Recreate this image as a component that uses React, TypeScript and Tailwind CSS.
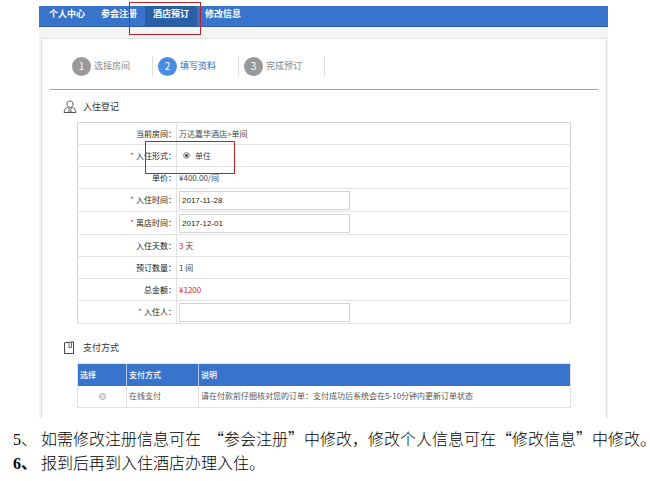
import React, { useState } from 'react';

const navItems = ['个人中心', '参会注册', '酒店预订', '修改信息'];
const steps = ['选择房间', '填写资料', '完成预订'];

const inputClass =
  'mt-0.5 mb-px block h-[19px] w-[171px] border border-[#d4d4d4] bg-white px-0.5 font-["Liberation_Sans","Noto_Sans_CJK_SC",sans-serif] text-[8px] text-[#222]';
const radioClass =
  'block size-[7px] appearance-none rounded-full border border-[#aaa] bg-[#e2e2e2] checked:bg-[#444] checked:shadow-[inset_0_0_0_1px_#eee]';

const PersonIcon = () => (
  <svg width="14" height="14" viewBox="0 0 14 14" fill="none" stroke="#555" strokeWidth="1">
    <path d="M7 1C4.9 1 3.9 2.4 3.9 4.1S5.2 7.4 7 7.4s3.1-1.6 3.1-3.3S9.1 1 7 1Z" />
    <path d="M4.6 7.2C2.8 8 1.3 9.6 1 12.500H13C12.700 9.600 11.200 8 9.400 7.200" />
    <path d="M4.800 7.400 6.300 9.300M9.200 7.400 7.700 9.300M6.300 9.300h1.400L8.300 12H5.700Z" strokeWidth="0.8" />
  </svg>
);

const BookIcon = () => (
  <svg width="12" height="14" viewBox="0 0 12 14" fill="none" stroke="#444" strokeWidth="1">
    <path d="M1.500 1.800 10.500 .800V13L9.500 12.500H1.500Z" />
    <path d="M6 1.500V6.500H8.500V1.200" strokeWidth="0.8" />
  </svg>
);

interface RowProps {
  label: string;
  htmlFor?: string;
  required?: boolean;
  children: React.ReactNode;
}

const Row: React.FC<RowProps> = ({ label, htmlFor, required, children }) => (
  <tr className="border-b border-[#e2e2e2]">
    <th className="h-[22px] w-[99px] border-r border-[#e2e2e2] p-0 text-right font-normal text-[#222]">
      {required && <span className="mr-0.5 text-[#e03030]">*</span>}
      <label htmlFor={htmlFor}>{label}：</label>
    </th>
    <td className="relative p-0 pl-0.5">{children}</td>
  </tr>
);

const SectionTitle: React.FC<{ icon: React.ReactNode; title: string }> = ({ icon, title }) => (
  <h2 className="flex h-4 items-center pl-[21px] text-[9px] text-[#333]">
    <span className="w-5">{icon}</span>
    {title}
  </h2>
);

export default function App() {
  const [checkIn, setCheckIn] = useState('2017-11-28');
  const [checkOut, setCheckOut] = useState('2017-12-01');
  const [guest, setGuest] = useState('');

  return (
    <div className="bg-white pt-1.5 font-['Noto_Sans_CJK_SC',sans-serif]" lang="zh-CN">
      <div className="mr-[42px] ml-[39px] bg-[#f4f4f4] text-[8px] leading-3">
        {/* Top navigation */}
        <nav className="flex h-[21px] border-b border-[#2f5f9f] bg-[#3874cb] pl-0.5">
          {navItems.map((item, index) => (
            <div key={item} className="relative">
              <a
                href="#"
                className={`block h-5 px-2 text-[9px] leading-4 font-bold text-white ${index === 2 ? 'bg-[#2a5fa8]' : ''}`}
              >
                {item}
              </a>
              {index === 2 && (
                <div className="pointer-events-none absolute -top-1 -left-4 z-10 h-[33px] w-[72px] border border-[#c22026]" />
              )}
            </div>
          ))}
        </nav>

        <main className="mt-[11px] mr-px ml-0.5 border-x border-t border-[#e2e2e2] bg-white pb-2.5">
          {/* Steps */}
          <ol className="mx-2 flex border-b border-[#8ba6c4] pt-[17px] pb-[13px] pl-[17px]">
            {steps.map((step, index) => (
              <li key={step} className="flex h-5 w-[86px] items-center gap-[3px] border-r border-[#ddd] pl-[5px]">
                <span
                  className={`flex size-[19px] items-center justify-center rounded-full text-[10px] text-white ${
                    index === 1 ? 'bg-[#4a8adf]' : 'bg-[#999]'
                  }`}
                >
                  {index + 1}
                </span>
                <span className={`text-[9px] ${index === 1 ? 'text-[#2f68bd]' : 'text-[#888]'}`}>{step}</span>
              </li>
            ))}
          </ol>

          {/* Check-in form */}
          <div className="pt-[9px]">
            <SectionTitle icon={<PersonIcon />} title="入住登记" />
          </div>
          <div className="mx-[35px] mt-[7px]">
            <table className="w-full border-collapse border border-[#d4d4d4] text-[#444]">
              <tbody>
                <Row label="当前房间">万达嘉华酒店&gt;单间</Row>
                <Row label="入住形式" htmlFor="single" required>
                  <div className="flex items-center gap-[5px] pl-1">
                    <input id="single" type="radio" name="stay" defaultChecked className={radioClass} />
                    单住
                  </div>
                  <div className="pointer-events-none absolute -top-1 -left-8 z-10 h-[33px] w-[90px] border border-[#c22026]" />
                </Row>
                <Row label="单价">¥400.00/间</Row>
                <Row label="入住时间" htmlFor="checkin" required>
                  <input id="checkin" className={inputClass} value={checkIn} onChange={(e) => setCheckIn(e.target.value)} />
                </Row>
                <Row label="离店时间" htmlFor="checkout" required>
                  <input id="checkout" className={inputClass} value={checkOut} onChange={(e) => setCheckOut(e.target.value)} />
                </Row>
                <Row label="入住天数">
                  <span className="text-[#e8202c]">3</span> 天
                </Row>
                <Row label="预订数量">1 间</Row>
                <Row label="总金额">
                  <span className="text-[#e8202c]">¥1200</span>
                </Row>
                <Row label="入住人" htmlFor="guest" required>
                  <input id="guest" className={inputClass} value={guest} onChange={(e) => setGuest(e.target.value)} />
                </Row>
              </tbody>
            </table>
          </div>

          {/* Payment */}
          <div className="pt-4">
            <SectionTitle icon={<BookIcon />} title="支付方式" />
          </div>
          <div className="mx-[35px] mt-[7px]">
            <table className="w-full border-collapse border border-[#e2e2e2] text-left text-[#555]">
              <thead className="bg-[#3874cb] text-white">
                <tr className="h-[22px]">
                  <th className="w-[49px] border-r border-[#b4cbec] p-0 pl-0.5 font-medium">选择</th>
                  <th className="w-[72px] border-r border-[#b4cbec] p-0 pl-0.5 font-medium">支付方式</th>
                  <th className="p-0 pl-0.5 font-medium">说明</th>
                </tr>
              </thead>
              <tbody>
                <tr className="h-[22px]">
                  <td className="border-r border-[#e2e2e2] p-0">
                    <input id="online" type="radio" name="pay" className={`mx-auto ${radioClass}`} />
                  </td>
                  <td className="border-r border-[#e2e2e2] p-0 pl-0.5">
                    <label htmlFor="online">在线支付</label>
                  </td>
                  <td className="p-0 pl-0.5">请在付款前仔细核对您的订单：支付成功后系统会在5-10分钟内更新订单状态</td>
                </tr>
              </tbody>
            </table>
          </div>
        </main>
      </div>

      {/* Notes under the form */}
      <div className="mt-2 pl-[13px] text-[16px] leading-6 text-black">
        <p className="flex h-6 items-baseline">
          <span className="w-7 shrink-0 font-light">
            <span className="font-['Liberation_Serif',serif] leading-none">5</span>、
          </span>
          <span className="font-light whitespace-pre">
            如需修改注册信息可在{'  '}“参会注册”中修改，修改个人信息可在“修改信息”中修改
            <span className="[font-feature-settings:'halt']">。</span>
          </span>
        </p>
        <p className="flex h-6 items-baseline">
          <span className="w-7 shrink-0 font-bold">
            <span className="font-['Liberation_Serif',serif] leading-none">6</span>、
          </span>
          <span className="font-light">报到后再到入住酒店办理入住。</span>
        </p>
      </div>
    </div>
  );
}
